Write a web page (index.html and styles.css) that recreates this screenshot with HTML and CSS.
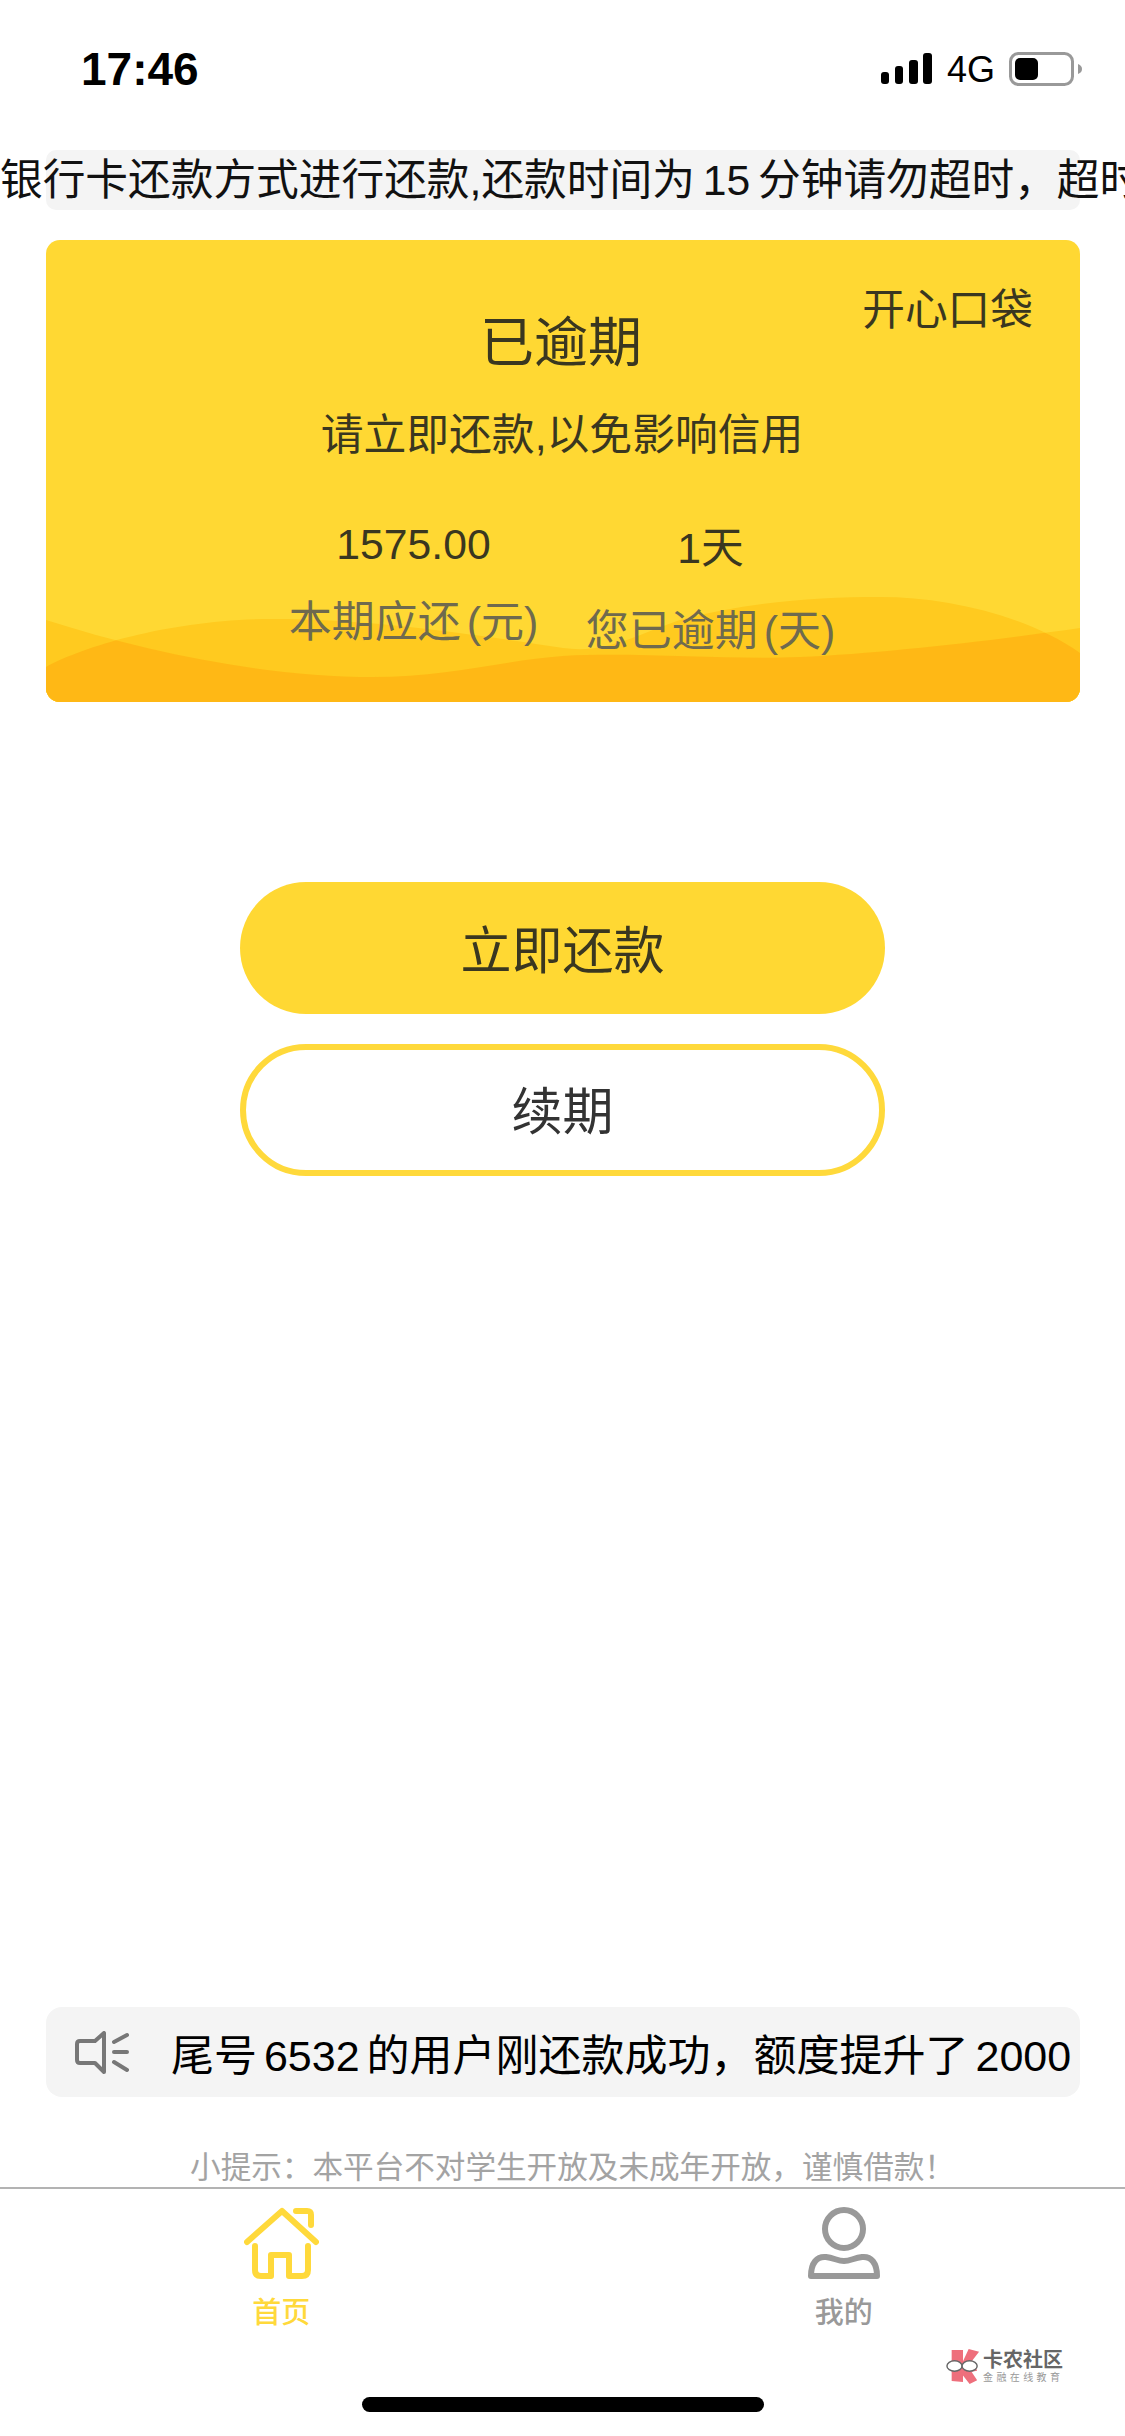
FILE: index.html
```html
<!DOCTYPE html>
<html lang="zh-CN">
<head>
<meta charset="utf-8">
<title>开心口袋</title>
<link rel="stylesheet" href="styles.css">
</head>
<body>
<div class="page">
  <header class="status">
    <span class="time">17:46</span>
    <div class="status-right">
      <svg class="signal" width="51" height="31" viewBox="0 0 51 31"><rect x="0" y="19" width="8" height="12" rx="3"/><rect x="14" y="13" width="8" height="18" rx="3"/><rect x="28" y="7" width="9" height="24" rx="3"/><rect x="42" y="0" width="9" height="31" rx="3"/></svg>
      <span class="net">4G</span>
      <svg class="battery" width="73" height="34" viewBox="0 0 73 34"><rect x="1.5" y="1.5" width="62" height="31" rx="8" fill="#fff" stroke="#999" stroke-width="3"/><rect x="6" y="6" width="23" height="22" rx="5" fill="#000"/><path d="M69 12 C72 13 73 15 73 17 C73 19 72 21 69 22Z" fill="#999"/></svg>
    </div>
  </header>

  <div class="notice"><div class="notice-text">银行卡还款方式进行还款,还款时间为 15 分钟请勿超时，超时将影响您的信用</div></div>

  <section class="card">
    <svg class="waves" width="1034" height="462" viewBox="0 0 1034 462" preserveAspectRatio="none">
      <defs>
        <clipPath id="wave-clip"><path d="M0 427C40 405 130 379 227 379C330 379 430 395 517 408C560 414 590 395 634 380C700 362 770 357 834 357C900 357 980 375 1034 413V462H0Z"/></clipPath>
      </defs>
      <path fill="#ffca1f" d="M0 427C40 405 130 379 227 379C330 379 430 395 517 408C560 414 590 395 634 380C700 362 770 357 834 357C900 357 980 375 1034 413V462H0Z"/>
      <path fill="#ffca1f" d="M0 380C100 412 220 437 327 437C400 437 460 420 517 416C590 412 680 420 754 417C840 413 950 400 1034 388V462H0Z"/>
      <path fill="#ffb815" clip-path="url(#wave-clip)" d="M0 380C100 412 220 437 327 437C400 437 460 420 517 416C590 412 680 420 754 417C840 413 950 400 1034 388V462H0Z"/>
    </svg>
    <div class="brand">开心口袋</div>
    <h1 class="card-title">已逾期</h1>
    <p class="card-sub">请立即还款,以免影响信用</p>
    <div class="stats">
      <div class="stat">
        <div class="stat-value">1575.00</div>
        <div class="stat-label">本期应还 (元)</div>
      </div>
      <div class="stat stat-late">
        <div class="stat-value">1天</div>
        <div class="stat-label">您已逾期 (天)</div>
      </div>
    </div>
  </section>

  <div class="actions">
    <button class="btn btn-solid">立即还款</button>
    <button class="btn btn-outline">续期</button>
  </div>

  <div class="spacer"></div>

  <div class="ticker">
    <svg class="speaker" width="54" height="43" viewBox="0 0 54 43" fill="none" stroke="#777" stroke-width="4" stroke-linecap="round" stroke-linejoin="round"><path d="M5 10H20L29 2V41L20 32H5C3 32 2 31 2 29V13C2 11 3 10 5 10Z"/><path d="M39 11L52 4M39 21H52M39 31L52 39"/></svg>
    <span class="ticker-text">尾号 6532 的用户刚还款成功，额度提升了 2000</span>
  </div>

  <p class="hint">小提示：本平台不对学生开放及未成年开放，谨慎借款！</p>

  <nav class="tabs">
    <a class="tab tab-active">
      <svg width="75" height="72" viewBox="0 0 75 72" fill="none" stroke="#ffd93b" stroke-width="6" stroke-linecap="round" stroke-linejoin="round"><path d="M3 35L38 4L72 35"/><path d="M52 4H63C66 4 67 5 67 8V18"/><path d="M11 39V63C11 67 13 69 17 69H27V48H45V69H58C62 69 64 67 64 63V39"/></svg>
      <span>首页</span>
    </a>
    <a class="tab">
      <svg width="72" height="72" viewBox="0 0 72 72" fill="none" stroke="#999" stroke-width="6" stroke-linejoin="round"><circle cx="36" cy="22" r="19"/><path d="M3 69H69C69 56 63 49 54 50C46 51 42 54 36 54C30 54 26 51 18 50C9 49 3 56 3 69Z"/></svg>
      <span>我的</span>
    </a>
  </nav>

  <div class="home-bar"></div>

  <div class="watermark">
    <svg width="34" height="36" viewBox="0 0 36 38"><path fill="#ee6f7c" d="M6 2H18V14L24 1L35 4L25 17L30 17L33 24L27 25L33 34L25 38L18 29V36L6 35V24L2 22L6 14Z"/><ellipse cx="9" cy="19" rx="8" ry="5.5" fill="#fff" stroke="#666" stroke-width="1.5"/><ellipse cx="25" cy="19" rx="8" ry="5.5" fill="#fff" stroke="#666" stroke-width="1.5"/></svg>
    <div class="mark-text">
      <div class="mark-name">卡农社区</div>
      <div class="mark-sub">金融在线教育</div>
    </div>
  </div>
</div>
</body>
</html>
```

FILE: styles.css
```css
* { box-sizing: border-box; }
html, body { margin: 0; padding: 0; background: #fff; }
body { font-family: "Liberation Sans", "Noto Sans CJK SC", sans-serif; color: #000; }

.page {
  position: relative;
  width: 1125px;
  height: 2436px;
  overflow: hidden;
  display: flex;
  flex-direction: column;
}

/* Status bar */
.status {
  height: 150px;
  flex: none;
  padding: 0 43px 0 81px;
  display: flex;
  justify-content: space-between;
  align-items: flex-start;
}
.time { font-size: 46px; font-weight: 700; line-height: 34px; margin-top: 52px; letter-spacing: 0; }
.status-right { display: flex; align-items: flex-start; margin-top: 52px; }
.signal { margin-top: 1px; }
.net { font-size: 36px; line-height: 26px; margin: 5px 14px 0 15px; }

/* Scrolling notice */
.notice {
  height: 60px;
  flex: none;
  margin: 0 45px 30px 46px;
  background: #f4f4f4;
  border-radius: 10px;
  display: flex;
  align-items: center;
}
.notice-text { margin-left: -46px; font-size: 42.7px; line-height: 60px; white-space: nowrap; word-spacing: -4px; color: #111; }

/* Card */
.card {
  position: relative;
  flex: none;
  height: 462px;
  margin: 0 45px 0 46px;
  background: #ffd833;
  border-radius: 14px;
  overflow: hidden;
  color: #3a3720;
  text-align: center;
  padding-top: 72px;
}
.waves { position: absolute; left: 0; top: 0; }
.brand { position: absolute; right: 47px; top: 49px; font-size: 42.7px; line-height: 42px; }
.card-title { position: relative; margin: 0; padding-right: 4px; font-size: 54px; font-weight: 400; line-height: 62px; }
.card-sub { position: relative; margin: 40px 0 0; padding-right: 2px; font-size: 42.8px; line-height: 42px; }
.stats {
  position: relative;
  display: grid;
  grid-template-columns: 297px 297px;
  margin: 63px 0 0 219px;
}
.stat-value { font-size: 42.7px; line-height: 50px; }
.stat-label { margin-top: 28px; font-size: 43px; line-height: 50px; color: #6f6a4e; white-space: nowrap; word-spacing: -6px; }
.stat-late { padding-top: 4px; }
.stat-late .stat-label { margin-top: 33px; }

/* Buttons */
.actions { flex: none; margin-top: 180px; display: flex; flex-direction: column; align-items: center; gap: 30px; }
.btn {
  width: 645px;
  height: 132px;
  border-radius: 66px;
  font-family: inherit;
  font-size: 51px;
  color: #333;
  padding: 0;
}
.btn-solid { background: #ffd833; border: 0; color: #3a3720; padding-bottom: 2px; }
.btn-outline { background: #fff; border: 6px solid #ffd93b; padding-bottom: 4px; }

.spacer { flex: 1; }

/* Ticker */
.ticker {
  flex: none;
  height: 90px;
  margin: 0 45px 0 46px;
  background: #f4f4f4;
  border-radius: 16px;
  display: flex;
  align-items: center;
  padding-left: 29px;
}
.speaker { flex: none; margin-right: 42px; }
.ticker-text { font-size: 43px; white-space: nowrap; word-spacing: -5px; color: #000; }

.hint { flex: none; margin: 52px 0 0; padding-left: 20px; text-align: center; font-size: 30.6px; line-height: 36px; color: #a3a3a3; height: 38px; }

/* Tabs */
.tabs { flex: none; display: flex; border-top: 2px solid #b3b3b3; padding-top: 18px; height: 249px; }
.tab { flex: 1; display: flex; flex-direction: column; align-items: center; font-size: 29px; line-height: 34px; font-weight: 500; color: #999; }
.tab span { margin-top: 17px; }
.tab svg { display: block; }
.tab-active { color: #ffd93b; }

.home-bar {
  position: absolute;
  left: 362px;
  top: 2397px;
  width: 402px;
  height: 15px;
  border-radius: 8px;
  background: #000;
}

/* Watermark over the page */
.watermark { position: absolute; left: 946px; top: 2348px; display: flex; align-items: center; gap: 3px; }
.mark-name { font-size: 20px; line-height: 22px; font-weight: 700; color: #666; white-space: nowrap; }
.mark-sub { font-size: 10px; line-height: 13px; letter-spacing: 3.4px; color: #999; white-space: nowrap; }
```
